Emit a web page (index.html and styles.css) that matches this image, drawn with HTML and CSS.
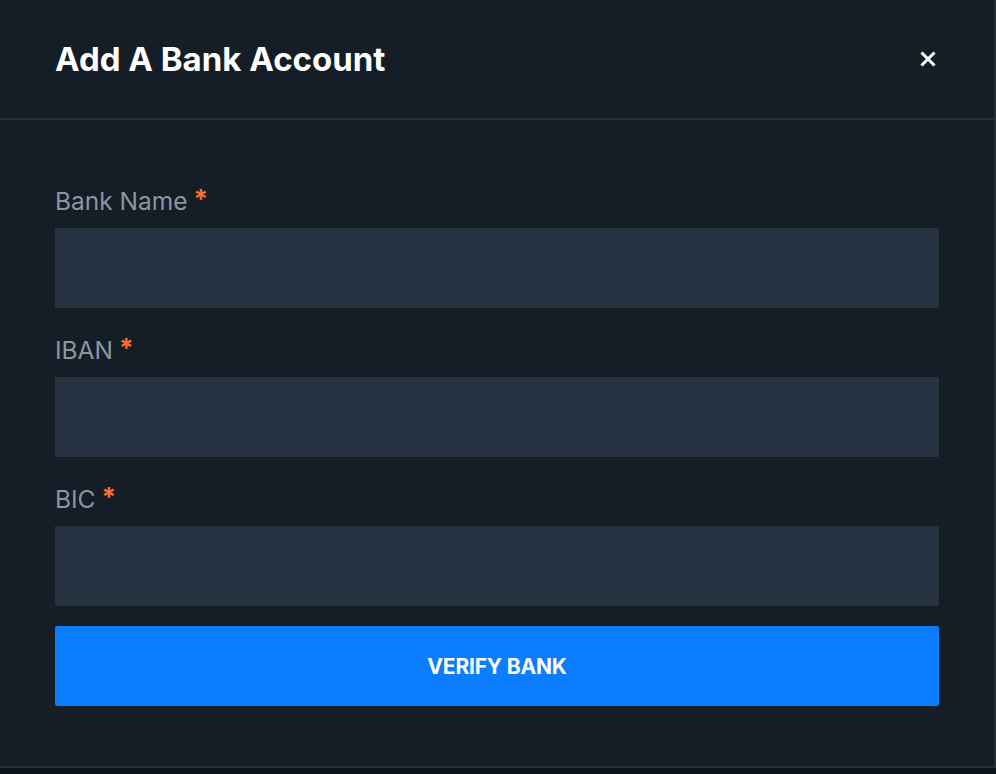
FILE: index.html
```html
<!DOCTYPE html>
<html>
<head>
<meta charset="utf-8">
<link rel="stylesheet" href="styles.css">
</head>
<body>
<div class="modal">
  <div class="modal-header">
    <h1 class="title">Add A Bank Account</h1>
    <button class="close" aria-label="Close">
      <svg width="16" height="16" viewBox="0 0 16 16"><path d="M2.5 2.5 L13.5 13.5 M13.5 2.5 L2.5 13.5" stroke="#fff" stroke-width="3" stroke-linecap="square"/></svg>
    </button>
  </div>
  <form class="modal-body">
    <div class="field">
      <label class="label">Bank Name<span class="req">*</span></label>
      <div class="input"></div>
    </div>
    <div class="field">
      <label class="label">IBAN<span class="req">*</span></label>
      <div class="input"></div>
    </div>
    <div class="field">
      <label class="label">BIC<span class="req">*</span></label>
      <div class="input"></div>
    </div>
    <button type="button" class="btn">VERIFY BANK</button>
  </form>
</div>
</body>
</html>
```

FILE: styles.css
```css
* { box-sizing: border-box; }
html, body { margin: 0; padding: 0; }
body {
  background: #0c131a;
  font-family: Inter, "Noto Sans", sans-serif;
  width: 996px;
  height: 774px;
  overflow: hidden;
}
.modal {
  width: 996px;
  height: 768px;
  background: #151d27;
  border-right: 2px solid #262d36;
  border-bottom: 2px solid #262d36;
}
.modal-header {
  height: 120px;
  border-bottom: 2px solid #262d36;
  display: flex;
  align-items: center;
  justify-content: space-between;
  padding: 0 55px 0 55px;
}
.title {
  margin: 0;
  color: #fff;
  font-size: 33px;
  font-weight: 700;
  letter-spacing: 0;
}
.close {
  background: none;
  border: 0;
  padding: 0;
  width: 16px;
  height: 16px;
  display: flex;
  margin-right: 3px;
}
.modal-body {
  padding: 66px 55px 0 55px;
  display: flex;
  flex-direction: column;
}
.field {
  display: flex;
  flex-direction: column;
  margin-bottom: 27px;
}
.label {
  color: #8a95a2;
  font-size: 24.5px;
  line-height: 30px;
  margin-bottom: 12px;
  display: flex;
}
.req {
  color: #ff6d2e;
  font-weight: 700;
  font-size: 26px;
  margin-left: 6px;
  line-height: 26px;
}
.input {
  height: 80px;
  background: #253343;
  border: 2px solid #29313b;
  border-radius: 1px;
}
.field:nth-of-type(3) { margin-bottom: 20px; }
.btn {
  height: 80px;
  background: #0d7dff;
  border: 0;
  border-radius: 2px;
  color: #fff;
  font-family: Inter, sans-serif;
  font-weight: 700;
  font-size: 21px;
  letter-spacing: -0.2px;
}
```
